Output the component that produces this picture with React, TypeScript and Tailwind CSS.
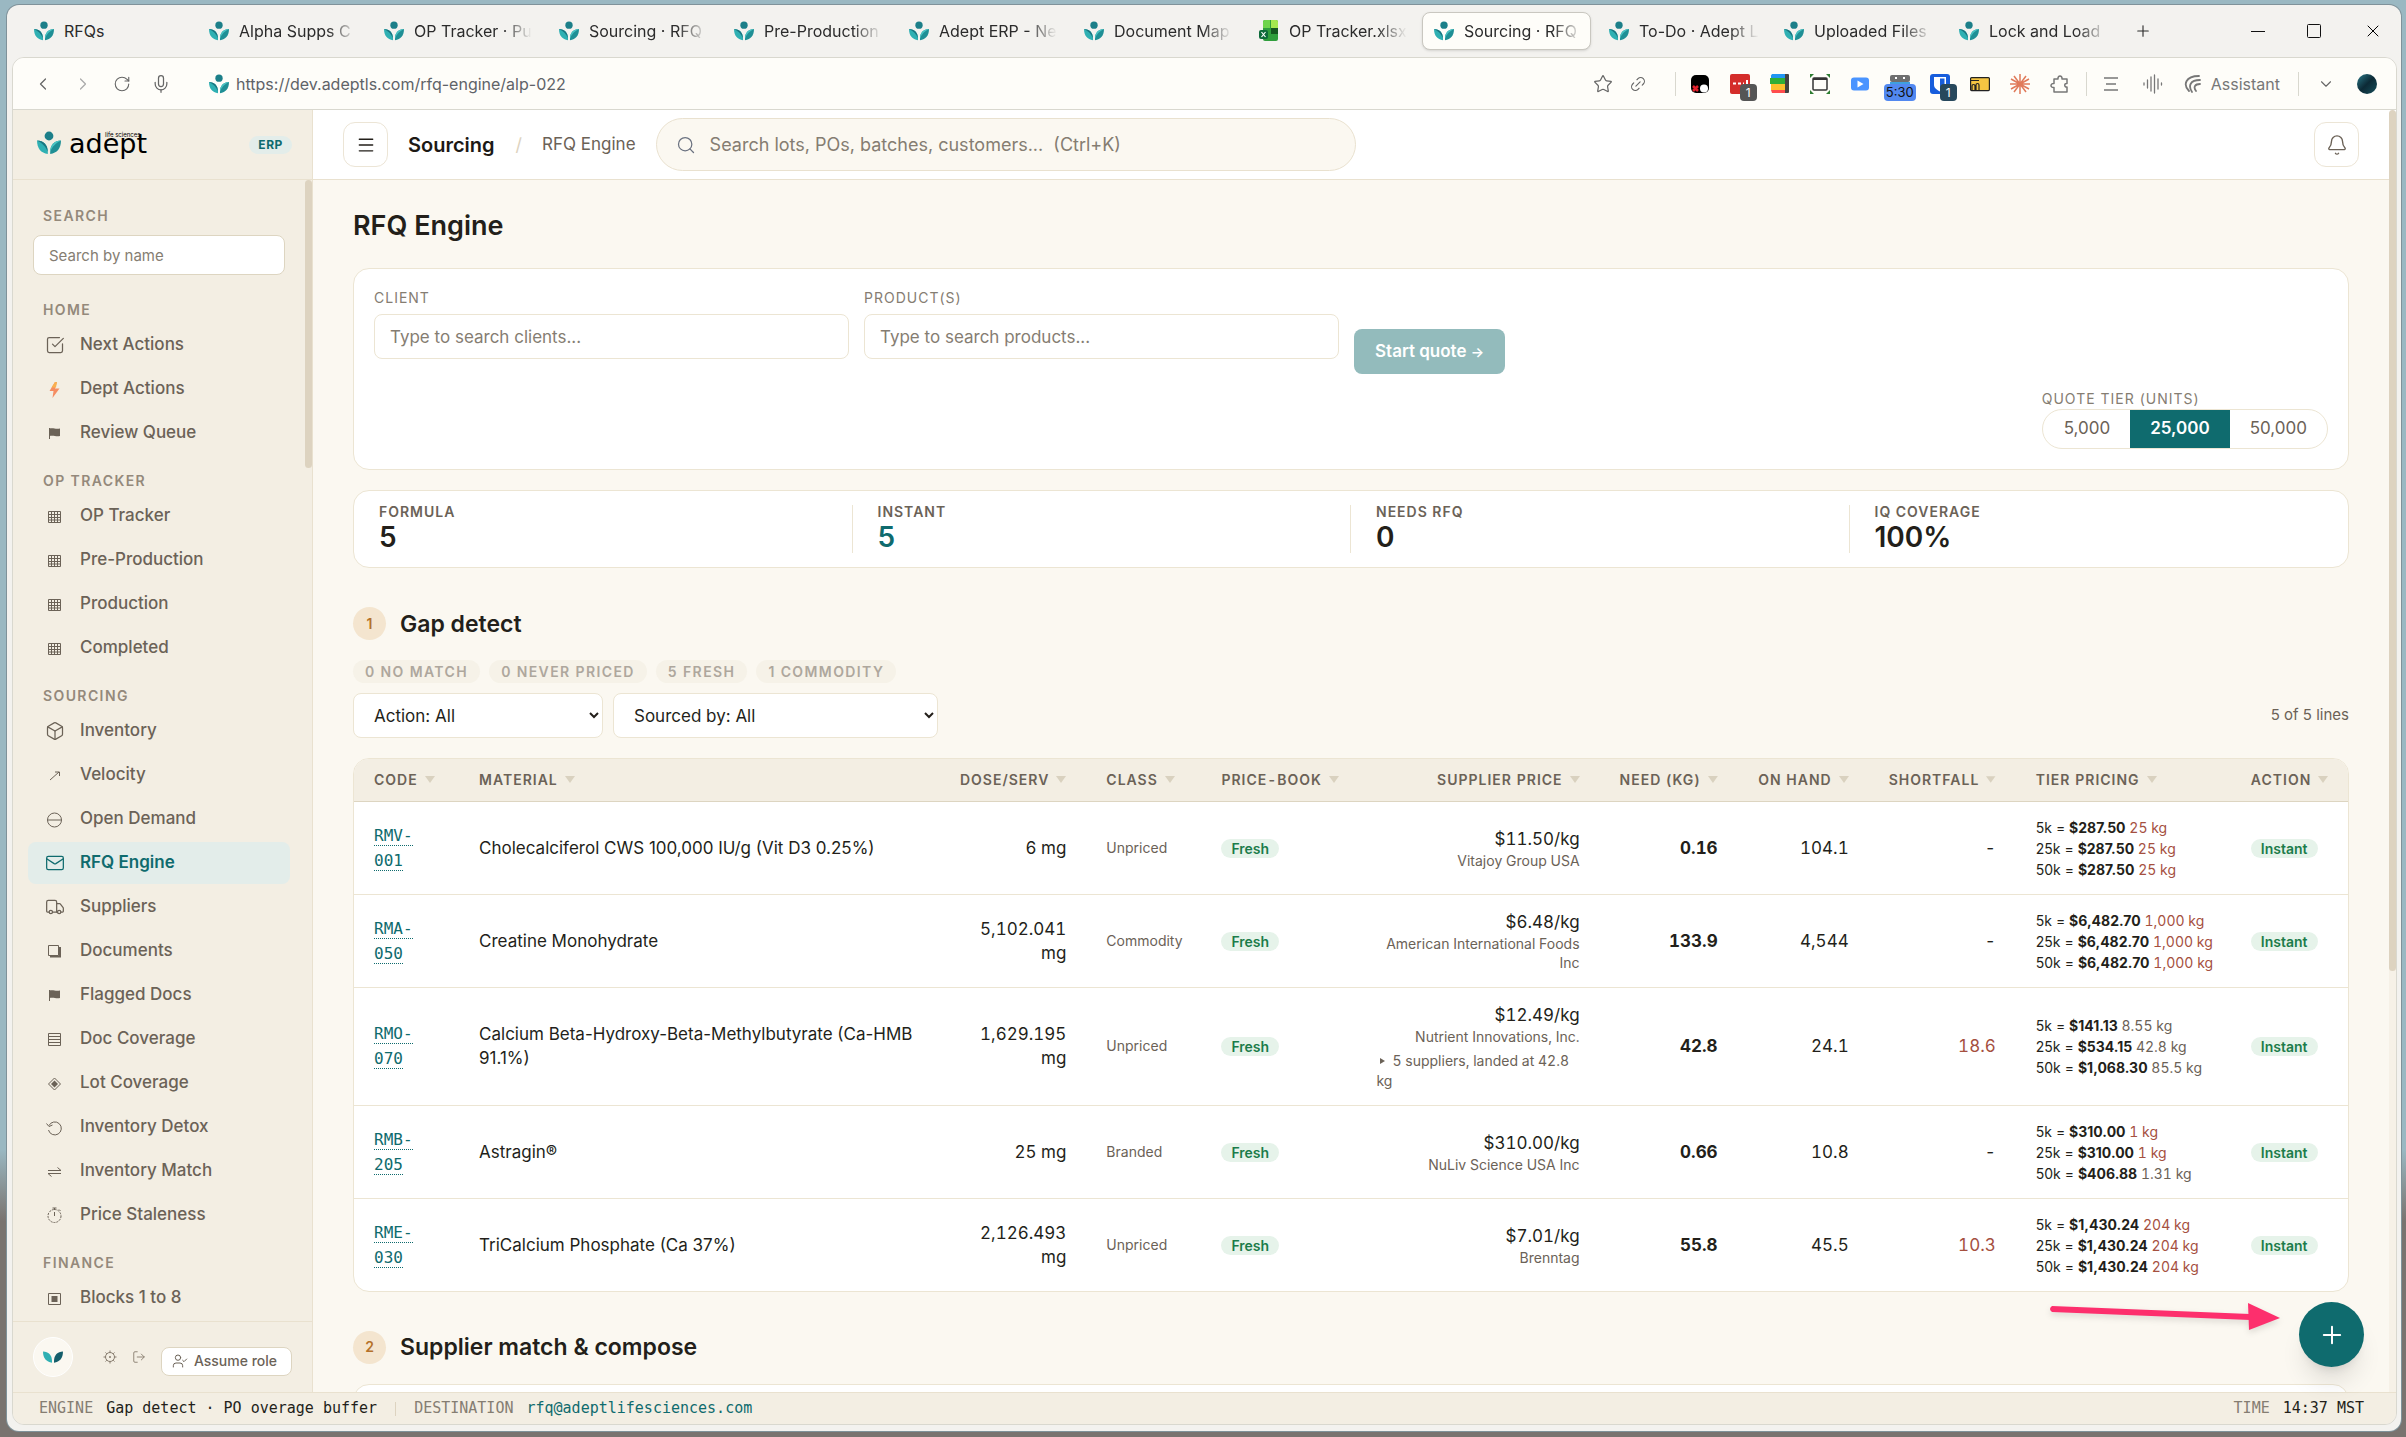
import { type ReactNode } from 'react';
import {
    Bell,
    Box,
    ChevronDown,
    ChevronLeft,
    ChevronRight,
    Link2,
    LogOut,
    Mail,
    Menu,
    Mic,
    Plus,
    Puzzle,
    RotateCw,
    Search,
    SquareCheckBig,
    Star,
    Truck,
    UserCheck,
    X,
} from 'lucide-react';

type Tier = { units: string; price: string; qty: string; over: boolean };

type Line = {
    code: [string, string];
    material: string;
    dose: string;
    cls: string;
    price: string;
    supplier: string;
    landed?: string;
    need: string;
    onHand: string;
    shortfall: string;
    tiers: Tier[];
};

const tabs = [
    { title: 'RFQs', short: true },
    { title: 'Alpha Supps C' },
    { title: 'OP Tracker · Pu' },
    { title: 'Sourcing · RFQ' },
    { title: 'Pre-Production' },
    { title: 'Adept ERP - Ne' },
    { title: 'Document Map' },
    { title: 'OP Tracker.xlsx', excel: true },
    { title: 'Sourcing · RFQ', active: true },
    { title: 'To-Do · Adept L' },
    { title: 'Uploaded Files' },
    { title: 'Lock and Load' },
];

const lines: Line[] = [
    {
        code: ['RMV-', '001'],
        material: 'Cholecalciferol CWS 100,000 IU/g (Vit D3 0.25%)',
        dose: '6 mg',
        cls: 'Unpriced',
        price: '$11.50/kg',
        supplier: 'Vitajoy Group USA',
        need: '0.16',
        onHand: '104.1',
        shortfall: '-',
        tiers: [
            { units: '5k', price: '$287.50', qty: '25 kg', over: true },
            { units: '25k', price: '$287.50', qty: '25 kg', over: true },
            { units: '50k', price: '$287.50', qty: '25 kg', over: true },
        ],
    },
    {
        code: ['RMA-', '050'],
        material: 'Creatine Monohydrate',
        dose: '5,102.041 mg',
        cls: 'Commodity',
        price: '$6.48/kg',
        supplier: 'American International Foods Inc',
        need: '133.9',
        onHand: '4,544',
        shortfall: '-',
        tiers: [
            { units: '5k', price: '$6,482.70', qty: '1,000 kg', over: true },
            { units: '25k', price: '$6,482.70', qty: '1,000 kg', over: true },
            { units: '50k', price: '$6,482.70', qty: '1,000 kg', over: true },
        ],
    },
    {
        code: ['RMO-', '070'],
        material: 'Calcium Beta-Hydroxy-Beta-Methylbutyrate (Ca-HMB 91.1%)',
        dose: '1,629.195 mg',
        cls: 'Unpriced',
        price: '$12.49/kg',
        supplier: 'Nutrient Innovations, Inc.',
        landed: '5 suppliers, landed at 42.8 kg',
        need: '42.8',
        onHand: '24.1',
        shortfall: '18.6',
        tiers: [
            { units: '5k', price: '$141.13', qty: '8.55 kg', over: false },
            { units: '25k', price: '$534.15', qty: '42.8 kg', over: false },
            { units: '50k', price: '$1,068.30', qty: '85.5 kg', over: false },
        ],
    },
    {
        code: ['RMB-', '205'],
        material: 'Astragin®',
        dose: '25 mg',
        cls: 'Branded',
        price: '$310.00/kg',
        supplier: 'NuLiv Science USA Inc',
        need: '0.66',
        onHand: '10.8',
        shortfall: '-',
        tiers: [
            { units: '5k', price: '$310.00', qty: '1 kg', over: true },
            { units: '25k', price: '$310.00', qty: '1 kg', over: true },
            { units: '50k', price: '$406.88', qty: '1.31 kg', over: false },
        ],
    },
    {
        code: ['RME-', '030'],
        material: 'TriCalcium Phosphate (Ca 37%)',
        dose: '2,126.493 mg',
        cls: 'Unpriced',
        price: '$7.01/kg',
        supplier: 'Brenntag',
        need: '55.8',
        onHand: '45.5',
        shortfall: '10.3',
        tiers: [
            { units: '5k', price: '$1,430.24', qty: '204 kg', over: true },
            { units: '25k', price: '$1,430.24', qty: '204 kg', over: true },
            { units: '50k', price: '$1,430.24', qty: '204 kg', over: true },
        ],
    },
];

const Leaves = () => (
    <>
        <path d="M0 9.5c6.5 0 10.8 4.2 10.8 11.5v2C4 22 0 17.500 0 9.500z" fill="#2fb0b3" />
        <path d="M24 9.500c-6.500 0-10.800 4.200-10.800 11.500v2C20 22 24 17.500 24 9.500z" fill="#1f8f95" />
        <path d="M0 9.500c6.500 0 10.800 4.200 10.800 11.500C9 15.500 5 12 0 9.500z" fill="#1b7680" />
        <path d="M24 9.500c-6.500 0-10.800 4.200-10.800 11.500C15 15.500 19 12 24 9.500z" fill="#49c2c2" />
    </>
);

const BrandMark = ({ className }: { className: string }) => (
    <svg viewBox="0 0 24 24" className={className} aria-hidden="true">
        <circle cx="12" cy="5" r="4.400" fill="#1c7f89" />
        <Leaves />
    </svg>
);

const ExcelMark = () => (
    <svg viewBox="0 0 20 22" className="w-5 h-[22px] shrink-0" aria-hidden="true">
        <rect x="4" y="0" width="15" height="21" rx="2" fill="#2f9e3c" />
        <path d="M6 0h5v8H4V2a2 2 0 0 1 2-2z" fill="#6fd44b" />
        <path d="M12 0h5a2 2 0 0 1 2 2v6h-7z" fill="#a5e84f" />
        <path d="M12 8h7v6h-7z" fill="#14581f" />
        <rect x="0" y="10" width="9" height="9" rx="2" fill="#0d6b3a" />
        <path d="M2.500 12l4 5M6.500 12l-4 5" stroke="#fff" strokeWidth="1.200" />
    </svg>
);

const Glyph = ({ children }: { children: ReactNode }) => (
    <svg viewBox="0 0 20 20" className="w-5 h-5 shrink-0" fill="none" stroke="currentColor" strokeWidth="1" aria-hidden="true">
        {children}
    </svg>
);

const GridGlyph = () => (
    <Glyph>
        <path d="M3.500 5.500h12v11h-12zM3.500 8.500h12M3.500 11.500h12M3.500 14h12M6.500 5.500v11M9.500 5.500v11M12.500 5.500v11" />
    </Glyph>
);

const FlagGlyph = () => (
    <Glyph>
        <path d="M4.500 5v11" />
        <path d="M4.500 5.500c4-1 6 1 10.500 0v7.500c-4 1-6-1-10.500 0z" fill="currentColor" stroke="none" />
    </Glyph>
);

const lucideNav = 'w-5 h-5 shrink-0 stroke-[1.5]';

const navSections: { label: string; items: { name: string; icon: ReactNode; active?: boolean }[] }[] = [
    {
        label: 'HOME',
        items: [
            { name: 'Next Actions', icon: <SquareCheckBig className={lucideNav} /> },
            {
                name: 'Dept Actions',
                icon: (
                    <Glyph>
                        <path d="M10 3L4.500 12h4L7.500 19l7-9.500H10l2-6.500z" fill="#f58d62" stroke="none" />
                        <path d="M10 3L6.500 8.500h4.500l1-5.500z" fill="#f9b04f" stroke="none" />
                    </Glyph>
                ),
            },
            { name: 'Review Queue', icon: <FlagGlyph /> },
        ],
    },
    {
        label: 'OP TRACKER',
        items: [
            { name: 'OP Tracker', icon: <GridGlyph /> },
            { name: 'Pre-Production', icon: <GridGlyph /> },
            { name: 'Production', icon: <GridGlyph /> },
            { name: 'Completed', icon: <GridGlyph /> },
        ],
    },
    {
        label: 'SOURCING',
        items: [
            { name: 'Inventory', icon: <Box className={lucideNav} /> },
            {
                name: 'Velocity',
                icon: (
                    <Glyph>
                        <path d="M5 15l9-8M10 7h4.500v4" />
                    </Glyph>
                ),
            },
            {
                name: 'Open Demand',
                icon: (
                    <Glyph>
                        <circle cx="9.500" cy="11" r="7" />
                        <path d="M2.500 11h14" />
                    </Glyph>
                ),
            },
            { name: 'RFQ Engine', icon: <Mail className={lucideNav} />, active: true },
            { name: 'Suppliers', icon: <Truck className={lucideNav} /> },
            {
                name: 'Documents',
                icon: (
                    <Glyph>
                        <path d="M3.500 4.500h10v10h-10z" />
                        <path d="M5 15.500h10V6" strokeWidth="2" />
                    </Glyph>
                ),
            },
            { name: 'Flagged Docs', icon: <FlagGlyph /> },
            {
                name: 'Doc Coverage',
                icon: (
                    <Glyph>
                        <path d="M3.500 4.500h12v12h-12zM3.500 7.500h12M3.500 10.500h12M3.500 13.500h12" />
                    </Glyph>
                ),
            },
            {
                name: 'Lot Coverage',
                icon: (
                    <Glyph>
                        <path d="M9.500 5l6 6-6 6-6-6z" />
                        <path d="M9.500 7.500L13 11l-3.500 3.500L6 11z" fill="currentColor" stroke="none" />
                    </Glyph>
                ),
            },
            {
                name: 'Inventory Detox',
                icon: (
                    <Glyph>
                        <path d="M4 8.500a6.500 6.500 0 1 1-.5 4.500M1.500 6.500l2.500 3 3.500-1.500" />
                    </Glyph>
                ),
            },
            {
                name: 'Inventory Match',
                icon: (
                    <Glyph>
                        <path d="M3 9.500h13l-3.500-3M16 12.500H3l3.500 3" />
                    </Glyph>
                ),
            },
            {
                name: 'Price Staleness',
                icon: (
                    <Glyph>
                        <circle cx="9.500" cy="11" r="6.500" strokeDasharray="2 1" />
                        <path d="M9.500 11V7M7.500 3h4M9.500 3v2M14 4.500l1.500 1.500" />
                    </Glyph>
                ),
            },
        ],
    },
    {
        label: 'FINANCE',
        items: [
            {
                name: 'Blocks 1 to 8',
                icon: (
                    <Glyph>
                        <path d="M3.500 5.500h12v11h-12z" />
                        <path d="M6.500 8h6v6h-6z" fill="currentColor" stroke="none" />
                    </Glyph>
                ),
            },
        ],
    },
];

const tabTitle = 'flex-1 text-left text-base whitespace-nowrap';

const TabStrip = () => (
    <div className="flex items-center h-[52px] shrink-0 pl-2.5 text-[#2b2b2b]">
        <div className="flex gap-1.5 min-w-0">
            {tabs.map((tab, idx) => (
                <button
                    key={idx}
                    className={
                        tab.active
                            ? 'flex items-center gap-2.5 w-[169px] h-[38px] pl-[11px] pr-2 rounded-lg bg-[#fefdf9] border border-[#c9c7c0] shadow-sm'
                            : 'flex items-center gap-2.5 w-[169px] h-[38px] pl-[11px] pr-2 rounded-lg border border-transparent'
                    }
                >
                    {tab.excel ? <ExcelMark /> : <BrandMark className="w-5 h-5 shrink-0" />}
                    <span
                        className={
                            tab.short
                                ? tabTitle
                                : `${tabTitle} [mask-image:linear-gradient(to_right,black_75%,transparent)]`
                        }
                    >
                        {tab.title}
                    </span>
                </button>
            ))}
        </div>
        <button className="ml-[18px]" aria-label="New tab">
            <Plus className="w-[18px] h-[18px] stroke-[1.5]" />
        </button>
        <div className="flex items-center gap-[42px] ml-auto pr-3.5">
            <button aria-label="Minimise">
                <svg viewBox="0 0 14 14" className="w-3.5 h-3.5" stroke="#111" aria-hidden="true">
                    <path d="M0 7.500h14" />
                </svg>
            </button>
            <button aria-label="Maximise">
                <svg viewBox="0 0 14 14" className="w-3.5 h-3.5" stroke="#111" fill="none" aria-hidden="true">
                    <rect x="0.500" y="0.500" width="13" height="13" rx="1" />
                </svg>
            </button>
            <button aria-label="Close">
                <X className="w-5 h-5 stroke-[1.2] text-black" />
            </button>
        </div>
    </div>
);

const Extensions = () => (
    <div className="flex items-center gap-5">
        <svg viewBox="0 0 20 20" className="w-5 h-5" aria-hidden="true">
            <rect x="1" y="1" width="18" height="18" rx="5" fill="#000" />
            <path d="M3 12l5 5M8 12l-5 5" stroke="#e2202c" strokeWidth="2.500" />
            <circle cx="14" cy="14.500" r="4" fill="#fff" />
        </svg>
        <span className="relative">
            <svg viewBox="0 0 20 20" className="w-5 h-5" aria-hidden="true">
                <rect width="20" height="20" rx="2" fill="#d42d2a" />
                <path d="M3 9.500h3M8 9.500h3M13 9.500h1M17 6v5" stroke="#fff" strokeWidth="2" />
            </svg>
            <span className="absolute top-2.5 left-2.5 w-[17px] h-[17px] rounded bg-[#555] text-white text-xs leading-[17px] text-center">1</span>
        </span>
        <svg viewBox="0 0 20 20" className="w-5 h-5" aria-hidden="true">
            <rect x="14" width="5" height="19" rx="1" fill="#424242" />
            <path d="M1 1.500L2 0h13v5H1z" fill="#2196f3" />
            <path d="M0 4h15v6H0z" fill="#2fae36" />
            <path d="M1 10h14v6H1z" fill="#fbc02d" />
            <path d="M1 16h14v3H2z" fill="#ff4d4d" />
        </svg>
        <svg viewBox="0 0 20 20" className="w-5 h-5" fill="none" aria-hidden="true">
            <rect x="3" y="4" width="14" height="12" rx="1" stroke="#333" strokeWidth="1.500" />
            <path d="M3 5h14" stroke="#333" strokeWidth="2" />
            <path d="M0 0h4L0 4zM20 0h-4l4 4zM0 20h4l-4-4zM20 20h-4l4-4z" fill="#2e7d32" />
        </svg>
        <svg viewBox="0 0 20 20" className="w-5 h-5" aria-hidden="true">
            <rect x="1" y="3.500" width="18" height="13" rx="3" fill="#4a94ff" />
            <path d="M7.500 6.500l6 3.500-6 3.500z" fill="#fff" />
        </svg>
        <span className="relative">
            <svg viewBox="0 0 20 20" className="w-5 h-5" aria-hidden="true">
                <rect y="1" width="20" height="7" rx="2" fill="#6f6f6f" />
                <path d="M5 4h2M13 4h2" stroke="#fff" strokeWidth="2" />
                <path d="M0 8h20v3H0z" fill="#3f9fe0" />
            </svg>
            <span className="absolute top-2.5 -left-1.5 w-8 h-[17px] rounded bg-[#5288f0] text-[#111] text-[13px] leading-[17px] text-center">5:30</span>
        </span>
        <span className="relative">
            <svg viewBox="0 0 20 20" className="w-5 h-5" aria-hidden="true">
                <rect width="20" height="20" rx="3" fill="#175ddc" />
                <path d="M4 3h12v8c0 3-3 5-6 6.500C7 16 4 14 4 11z" fill="#fff" />
                <path d="M10 4.500h4.500V11c0 1.500-2 3-4.500 4z" fill="#175ddc" />
            </svg>
            <span className="absolute top-2.5 left-2.5 w-[17px] h-[17px] rounded bg-[#27485c] text-white text-xs leading-[17px] text-center">1</span>
        </span>
        <svg viewBox="0 0 20 20" className="w-5 h-5" fill="none" stroke="#222" strokeWidth="1.200" aria-hidden="true">
            <rect x="0.600" y="3.600" width="18.800" height="13" rx="1" fill="#f5c542" />
            <path d="M0 6.500h9M2 16v-4c0-2 3-2 3 0v4M6 16v-5c0-2 3-2 3 0v5" />
        </svg>
        <svg viewBox="0 0 20 20" className="w-5 h-5" stroke="#e07a5a" strokeWidth="1.500" aria-hidden="true">
            <path d="M10 0v20M0 10h20M4 2l12 16M16 2L4 18M1 5l18 10M19 5L1 15" />
        </svg>
        <svg viewBox="0 0 20 20" className="w-5 h-5" fill="none" stroke="#777" strokeWidth="1.500" strokeLinejoin="round" aria-hidden="true">
            <path d="M4 5h4c-.5-4 4.500-4 4 0h5v4.500c-3-.5-3 4 0 3.500v5H4v-4.500c-4 .5-4-4.500 0-4z" />
        </svg>
    </div>
);

const Toolbar = () => (
    <div className="flex items-center h-[52px] shrink-0 pl-5 pr-[19px] bg-[#fefdf9] border-b border-[#d9d8cf] text-[#666]">
        <div className="flex items-center gap-5">
            <button aria-label="Back"><ChevronLeft className="w-5 h-5 stroke-[1.5]" /></button>
            <button aria-label="Forward"><ChevronRight className="w-5 h-5 stroke-[1.5] text-[#aaa]" /></button>
            <button aria-label="Reload"><RotateCw className="w-[18px] h-[18px] stroke-[1.5]" /></button>
            <button aria-label="Voice"><Mic className="w-5 h-5 stroke-[1.5]" /></button>
        </div>
        <div className="flex items-center gap-[7px] ml-[38px]">
            <BrandMark className="w-5 h-5" />
            <span className="text-base text-[#5f6368]">https://dev.adeptls.com/rfq-engine/alp-022</span>
        </div>
        <div className="flex items-center ml-auto">
            <Star className="w-5 h-5 stroke-[1.5]" />
            <Link2 className="w-[18px] h-[18px] ml-4 -rotate-45 stroke-[1.5]" />
            <span className="w-px h-6 ml-7 mr-3.5 bg-[#d9d8cf]" />
            <Extensions />
            <span className="w-px h-6 mx-4 bg-[#d9d8cf]" />
            <svg viewBox="0 0 16 16" className="w-4 h-4" stroke="#777" strokeWidth="1.500" aria-hidden="true">
                <path d="M1 2h14M3 8h10M1 14h14" />
            </svg>
            <svg viewBox="0 0 20 20" className="w-5 h-5 ml-6" stroke="#777" strokeWidth="1.300" strokeLinecap="round" aria-hidden="true">
                <path d="M1 9v2M4.500 6v8M8 3v14M11.500 1v18M15 5v10M18.500 9v2" />
            </svg>
            <svg viewBox="0 0 20 20" className="w-5 h-5 ml-5" fill="none" stroke="#777" strokeWidth="1.800" strokeLinecap="round" aria-hidden="true">
                <path d="M6 17C0 11 2 2 16 2M9 18C5 12 7 6 17 6M13 17c-3-4-1-7 4-7" />
            </svg>
            <span className="ml-2 text-base text-[#777]">Assistant</span>
            <span className="w-px h-6 mx-[18px] bg-[#d9d8cf]" />
            <ChevronDown className="w-[18px] h-[18px] stroke-[1.5]" />
            <span className="w-5 h-5 ml-[22px] rounded-full bg-linear-to-br from-[#2d7f8f] via-[#0c2a36] to-[#17505c]" />
        </div>
    </div>
);

const Sidebar = () => (
    <aside className="flex flex-col w-[300px] shrink-0 bg-[#f3eee3] border-r border-[#e9e1cf]">
        <div className="flex items-center h-[70px] shrink-0 pl-6 pr-5 border-b border-[#e9e1cf]">
            <BrandMark className="w-6 h-6 mb-1" />
            <div className="relative ml-2">
                <span className="font-['DejaVu_Sans',sans-serif] text-[27px] leading-7 text-black">adept</span>
                <span className="absolute top-0.5 left-9 text-[6px] leading-none text-black whitespace-nowrap">life sciences</span>
            </div>
            <span className="ml-auto px-[9px] rounded-full bg-[#e3edea] text-[#0f6b6e] text-xs leading-[18px] font-bold tracking-wider">ERP</span>
        </div>
        <div className="flex flex-1 min-h-0">
            <div className="flex-1 min-w-0 overflow-hidden pl-[15px] pr-[15px] text-[#6b6257]">
                <label htmlFor="nav-search" className="block pt-[29px] pl-[15px] mb-3 text-sm leading-[14px] font-semibold tracking-widest text-[#94897b]">
                    SEARCH
                </label>
                <div className="px-[5px] mb-2.5">
                    <input
                        id="nav-search"
                        placeholder="Search by name"
                        className="w-full h-10 px-[15px] rounded-lg bg-white border border-[#ddd5c1] text-[15px] placeholder:text-[#857d72]"
                    />
                </div>
                {navSections.map(section => (
                    <nav key={section.label} aria-label={section.label}>
                        <h2 className="pt-[18px] pb-[7px] pl-[15px] text-sm leading-[14px] font-semibold tracking-widest text-[#94897b]">
                            {section.label}
                        </h2>
                        {section.items.map(item => (
                            <a
                                key={item.name}
                                href="#"
                                className={
                                    item.active
                                        ? 'flex items-center gap-[15px] h-[42px] mb-0.5 px-[17px] rounded-lg bg-[#e3edea] text-[#0f6b6e] text-[17px] font-semibold'
                                        : 'flex items-center gap-[15px] h-[42px] mb-0.5 px-[17px] rounded-lg text-[17px] font-medium'
                                }
                            >
                                {item.icon}
                                {item.name}
                            </a>
                        ))}
                    </nav>
                ))}
            </div>
            <div className="w-[7px] shrink-0">
                <div className="h-[288px] rounded-full bg-[#ddd3c0]" />
            </div>
        </div>
        <div className="flex items-center h-[71px] shrink-0 pl-5 pr-5 border-t border-[#e9e1cf] text-[#857a6c]">
            <span className="flex items-center justify-center w-10 h-10 rounded-full bg-[#fbf8f1] border border-white">
                <svg viewBox="0 8 24 16" className="w-5 h-3.5" aria-hidden="true">
                    <path d="M0 9.500c6.500 0 10.800 4.200 10.800 11.500v2C4 22 0 17.500 0 9.500z" fill="#2fb0b3" />
                    <path d="M24 9.500c-6.500 0-10.800 4.200-10.800 11.500v2C20 22 24 17.500 24 9.500z" fill="#155e6b" />
                </svg>
            </span>
            <button className="ml-[30px]" aria-label="Settings">
                <svg viewBox="0 0 14 14" className="w-3.5 h-3.5" fill="none" stroke="currentColor" aria-hidden="true">
                    <circle cx="7" cy="7" r="4.500" />
                    <circle cx="7" cy="7" r="0.600" fill="currentColor" />
                    <path d="M7 .5v2M7 11.500v2M.5 7h2M11.500 7h2M2.500 2.500l1.300 1.300M10.200 10.200l1.300 1.300M11.500 2.500l-1.300 1.300M3.800 10.200l-1.300 1.300" />
                </svg>
            </button>
            <button className="ml-[15px]" aria-label="Log out">
                <LogOut className="w-3.5 h-3.5 stroke-[1.5]" />
            </button>
            <button className="flex items-center gap-1.5 h-[29px] mt-2 ml-auto pl-2.5 pr-3.5 rounded-lg bg-white border border-[#ddd5c1] text-sm font-medium text-[#6b6257] whitespace-nowrap">
                <UserCheck className="w-4 h-4 stroke-[1.5]" />
                Assume role
            </button>
        </div>
    </aside>
);

const Header = () => (
    <header className="flex items-center h-[70px] shrink-0 pl-[30px] pr-[37px] bg-white border-b border-[#e9e1cf]">
        <button className="flex items-center justify-center w-[45px] h-[45px] rounded-xl border border-[#ece5d6] text-[#231f1a]" aria-label="Toggle menu">
            <Menu className="w-5 h-5 stroke-[1.7]" />
        </button>
        <span className="ml-5 text-xl font-semibold text-[#1d1915]">Sourcing</span>
        <span className="ml-[21px] mr-5 text-lg text-[#ddd3c0]">/</span>
        <span className="text-[17px] text-[#6b6257]">RFQ Engine</span>
        <label className="flex items-center w-[700px] h-[53px] ml-5 px-[19px] rounded-full bg-[#fbf8f1] border border-[#e9e1cf]">
            <Search className="w-5 h-5 stroke-[1.5] text-[#6b7280]" />
            <input
                aria-label="Search everything"
                placeholder={'Search lots, POs, batches, customers...\u00a0 (Ctrl+K)'}
                className="flex-1 ml-3.5 bg-transparent text-lg placeholder:text-[#857d72] outline-none"
            />
        </label>
        <button className="flex items-center justify-center w-[45px] h-[45px] ml-auto rounded-xl border border-[#ece5d6] text-[#6b6257]" aria-label="Notifications">
            <Bell className="w-[22px] h-[22px] stroke-[1.5]" />
        </button>
    </header>
);

const fieldLabel = 'mb-[9px] text-sm leading-[14px] tracking-[1px] text-[#857d72]';
const fieldInput = 'h-[45px] px-[15px] rounded-lg bg-white border border-[#ece5d3] text-[17px] placeholder:text-[#857d72]';

const QuoteForm = () => (
    <section className="pt-[22px] px-5 pb-5 rounded-2xl bg-white border border-[#ece5d3]">
        <div className="flex items-end gap-[15px]">
            <div className="flex flex-col w-[475px] mb-[15px]">
                <label htmlFor="client" className={fieldLabel}>CLIENT</label>
                <input id="client" placeholder="Type to search clients..." className={fieldInput} />
            </div>
            <div className="flex flex-col w-[475px] mb-[15px]">
                <label htmlFor="products" className={fieldLabel}>PRODUCT(S)</label>
                <input id="products" placeholder="Type to search products..." className={fieldInput} />
            </div>
            <button className="h-[45px] px-[21px] rounded-lg bg-[#93bbbc] text-white text-[17px] font-semibold">
                Start quote <span className="text-sm">→</span>
            </button>
        </div>
        <div className="flex justify-end mt-[18px]">
            <div>
                <div className="mb-[3px] text-sm leading-[14px] tracking-[1px] text-[#857d72]">QUOTE TIER (UNITS)</div>
                <div className="flex h-10 rounded-full border border-[#ece5d3] overflow-hidden text-[17px] text-[#6b6257]">
                    <button className="pl-[21px] pr-5">5,000</button>
                    <button className="px-5 bg-[#0f6b6e] text-white font-semibold">25,000</button>
                    <button className="px-5">50,000</button>
                </div>
            </div>
        </div>
    </section>
);

const stats = [
    { label: 'FORMULA', value: '5' },
    { label: 'INSTANT', value: '5', highlight: true },
    { label: 'NEEDS RFQ', value: '0' },
    { label: 'IQ COVERAGE', value: '100%' },
];

const Stats = () => (
    <section className="grid grid-cols-4 py-3.5 mt-5 rounded-2xl bg-white border border-[#ece5d3] divide-x divide-[#ece5d3]">
        {stats.map(stat => (
            <div key={stat.label} className="px-[25px]">
                <div className="mb-0.5 text-sm leading-[14px] font-semibold tracking-[1px] text-[#6b6257]">{stat.label}</div>
                <div
                    className={
                        stat.highlight
                            ? 'text-[28px] leading-8 font-semibold text-[#0f6b6e]'
                            : 'text-[28px] leading-8 font-semibold text-[#231f1a]'
                    }
                >
                    {stat.value}
                </div>
            </div>
        ))}
    </section>
);

const StepHeading = ({ step, title }: { step: number; title: string }) => (
    <div className="flex items-center gap-3.5 mt-[39px]">
        <span className="flex items-center justify-center w-[33px] h-[33px] rounded-full bg-[#f4e5cf] text-[#b4712a] text-sm font-semibold">
            {step}
        </span>
        <h2 className="text-[23px] leading-8 font-semibold text-[#231f1a]">{title}</h2>
    </div>
);

const columns = [
    { name: 'CODE', width: 'w-[105px]' },
    { name: 'MATERIAL', width: 'w-[480px]' },
    { name: 'DOSE/SERV', width: 'w-[147px]', right: true },
    { name: 'CLASS', width: 'w-[115px]' },
    { name: 'PRICE-BOOK', width: 'w-[155px]' },
    { name: 'SUPPLIER PRICE', width: 'w-[243px]', right: true },
    { name: 'NEED (KG)', width: 'w-[138px]', right: true },
    { name: 'ON HAND', width: 'w-[131px]', right: true },
    { name: 'SHORTFALL', width: 'w-[147px]', right: true },
    { name: 'TIER PRICING', width: 'w-[215px]' },
    { name: 'ACTION', width: 'w-[117px]' },
];

const Badge = ({ children }: { children: ReactNode }) => (
    <span className="inline-block px-2.5 rounded-full bg-[#e6f3ea] text-[#1c7c4a] text-sm leading-[19px] font-semibold">{children}</span>
);

const GapTable = () => (
    <div className="mt-5 rounded-2xl bg-white border border-[#ece5d3] overflow-hidden">
        <table className="w-full table-fixed text-[17px] leading-6 text-[#231f1a] tabular-nums">
            <thead>
                <tr className="h-[42px] bg-[#f3eee3] border-b border-[#ddd5c1]">
                    {columns.map(col => (
                        <th key={col.name} scope="col" className={`${col.width} px-0 text-sm font-semibold text-[#6b6257] whitespace-nowrap`}>
                            <div className={col.right ? 'flex items-center justify-end gap-[7px] px-5' : 'flex items-center gap-[7px] pl-5'}>
                                <span className="tracking-[1px]">{col.name}</span>
                                <svg viewBox="0 0 10 7" className="w-2.5 h-[7px]" fill="#d9d1bf" aria-hidden="true">
                                    <path d="M0 0h10L5 7z" />
                                </svg>
                            </div>
                        </th>
                    ))}
                </tr>
            </thead>
            <tbody className="divide-y divide-[#ece5d3]">
                {lines.map(line => (
                    <tr key={line.code.join('')}>
                        <td className="px-5">
                            <a href="#" className="font-['DejaVu_Sans_Mono',monospace] text-base leading-6 text-[#0f6b6e]">
                                <span className="border-b border-dotted border-[#0f6b6e]">{line.code[0]}</span>
                                <br />
                                <span className="border-b border-dotted border-[#0f6b6e]">{line.code[1]}</span>
                            </a>
                        </td>
                        <td className="px-5 [font-variant-numeric:normal]">{line.material}</td>
                        <td className="px-5 text-right">{line.dose}</td>
                        <td className="px-5 text-sm text-[#6b6257]">{line.cls}</td>
                        <td className="px-5"><Badge>Fresh</Badge></td>
                        <td className="px-5 pt-[15px] pb-3.5 text-right">
                            {line.price}
                            <div className="text-sm leading-[19px] text-[#6b6257]">{line.supplier}</div>
                            {line.landed && (
                                <button className="block w-full mt-[5px] text-left text-sm leading-5 text-[#6b6257]">
                                    <svg viewBox="0 0 6 6" className="inline w-1.5 h-1.5 ml-1 mr-1.5 mb-0.5" fill="currentColor" aria-hidden="true">
                                        <path d="M0 0l5 3-5 3z" />
                                    </svg>
                                    {line.landed}
                                </button>
                            )}
                        </td>
                        <td className="px-5 text-right font-bold">{line.need}</td>
                        <td className="px-5 text-right">{line.onHand}</td>
                        <td className={line.shortfall === '-' ? 'px-5 text-right' : 'px-5 text-right text-[#a5503f]'}>{line.shortfall}</td>
                        <td className="pl-5 pt-[15px] pb-3.5 text-sm leading-[21px] whitespace-nowrap">
                            {line.tiers.map(tier => (
                                <div key={tier.units}>
                                    <span className="[font-variant-numeric:normal]">{tier.units} = <b>{tier.price}</b></span>{' '}
                                    <span className={tier.over ? 'text-[#a5503f]' : 'text-[#6b6257]'}>{tier.qty}</span>
                                </div>
                            ))}
                        </td>
                        <td className="pl-5"><Badge>Instant</Badge></td>
                    </tr>
                ))}
            </tbody>
        </table>
    </div>
);

const pills = ['0 NO MATCH', '0 NEVER PRICED', '5 FRESH', '1 COMMODITY'];
const selectStyle = 'h-[45px] pl-4 rounded-lg bg-white border border-[#ece5d3] text-[17px] text-[#231f1a]';

const Main = () => (
    <main className="flex flex-1 min-h-0">
        <div className="flex-1 min-w-0 overflow-hidden px-10 pt-[25px]">
            <h1 className="mb-[21px] text-[27px] leading-[42px] font-semibold text-[#231f1a]">RFQ Engine</h1>
            <QuoteForm />
            <Stats />
            <StepHeading step={1} title="Gap detect" />
            <div className="flex gap-[9px] mt-5">
                {pills.map(pill => (
                    <span key={pill} className="px-3 rounded-full bg-[#f6f2e8] text-[#aea79d] text-sm leading-[23px] font-semibold tracking-widest">
                        {pill}
                    </span>
                ))}
            </div>
            <div className="flex items-center gap-2.5 mt-2.5">
                <select aria-label="Action" className={`${selectStyle} w-[250px]`}>
                    <option>Action: All</option>
                </select>
                <select aria-label="Sourced by" className={`${selectStyle} w-[325px]`}>
                    <option>Sourced by: All</option>
                </select>
                <span className="ml-auto text-[15px] text-[#6b6257]">5 of 5 lines</span>
            </div>
            <GapTable />
            <StepHeading step={2} title="Supplier match & compose" />
            <div className="h-40 mt-5 rounded-2xl bg-white border border-[#ece5d3]" />
        </div>
        <div className="w-[7px] shrink-0 bg-[#f6f1e7]" />
    </main>
);

const StatusBar = () => (
    <footer className="flex items-center h-8 shrink-0 pl-[26px] pr-8 bg-[#f3eee3] border-t border-[#e9e1cf] font-['DejaVu_Sans_Mono',monospace] text-[15px] text-[#231f1a]">
        <span className="mr-[13px] text-[#857d72]">ENGINE</span>
        <span>Gap detect · PO overage buffer</span>
        <span className="w-px h-3.5 mx-[18px] bg-[#ddd3c0]" />
        <span className="mr-[13px] text-[#857d72]">DESTINATION</span>
        <a href="mailto:rfq@adeptlifesciences.com" className="text-[#0f6b6e]">rfq@adeptlifesciences.com</a>
        <span className="mr-[13px] ml-auto text-[#857d72]">TIME</span>
        <span>14:37 MST</span>
    </footer>
);

export default function App() {
    return (
        <div className="h-screen pt-[5px] pl-[7px] pr-[5px] pb-1.5 bg-linear-to-b from-[#9ab8c2] from-80% to-[#79736f] to-85% font-[Inter,sans-serif]">
            <div className="flex flex-col h-full pl-[5px] pr-1 pb-1.5 rounded-xl bg-[#f3f2ef] ring-1 ring-[#7f929a]">
                <TabStrip />
                <div className="flex flex-col flex-1 min-h-0 rounded-xl border border-[#d9d8cf] overflow-hidden">
                    <Toolbar />
                    <div className="flex flex-1 min-h-0">
                        <Sidebar />
                        <div className="relative flex flex-col flex-1 min-w-0 bg-[#fbf8f1]">
                            <Header />
                            <Main />
                            {/* Page scrollbar */}
                            <div className="absolute top-0 right-0 w-[7px] h-[861px] rounded-full bg-[#ddd3c0]" />
                            {/* Pointer to the create button */}
                            <svg viewBox="0 0 240 36" className="absolute right-[108px] bottom-[57px] w-60 h-9 drop-shadow-md" aria-hidden="true">
                                <path d="M4 7q-4 3 0 6l198 8v-6z" fill="#fd2f6d" />
                                <path d="M200 4l32 15-31 12z" fill="#fd2f6d" />
                            </svg>
                            <button
                                aria-label="Create"
                                className="absolute right-8 bottom-[25px] flex items-center justify-center w-[65px] h-[65px] rounded-full bg-[#0f6b6e] text-white shadow-xl"
                            >
                                <Plus className="w-7 h-7 stroke-[1.7]" />
                            </button>
                        </div>
                    </div>
                    <StatusBar />
                </div>
            </div>
        </div>
    );
}
